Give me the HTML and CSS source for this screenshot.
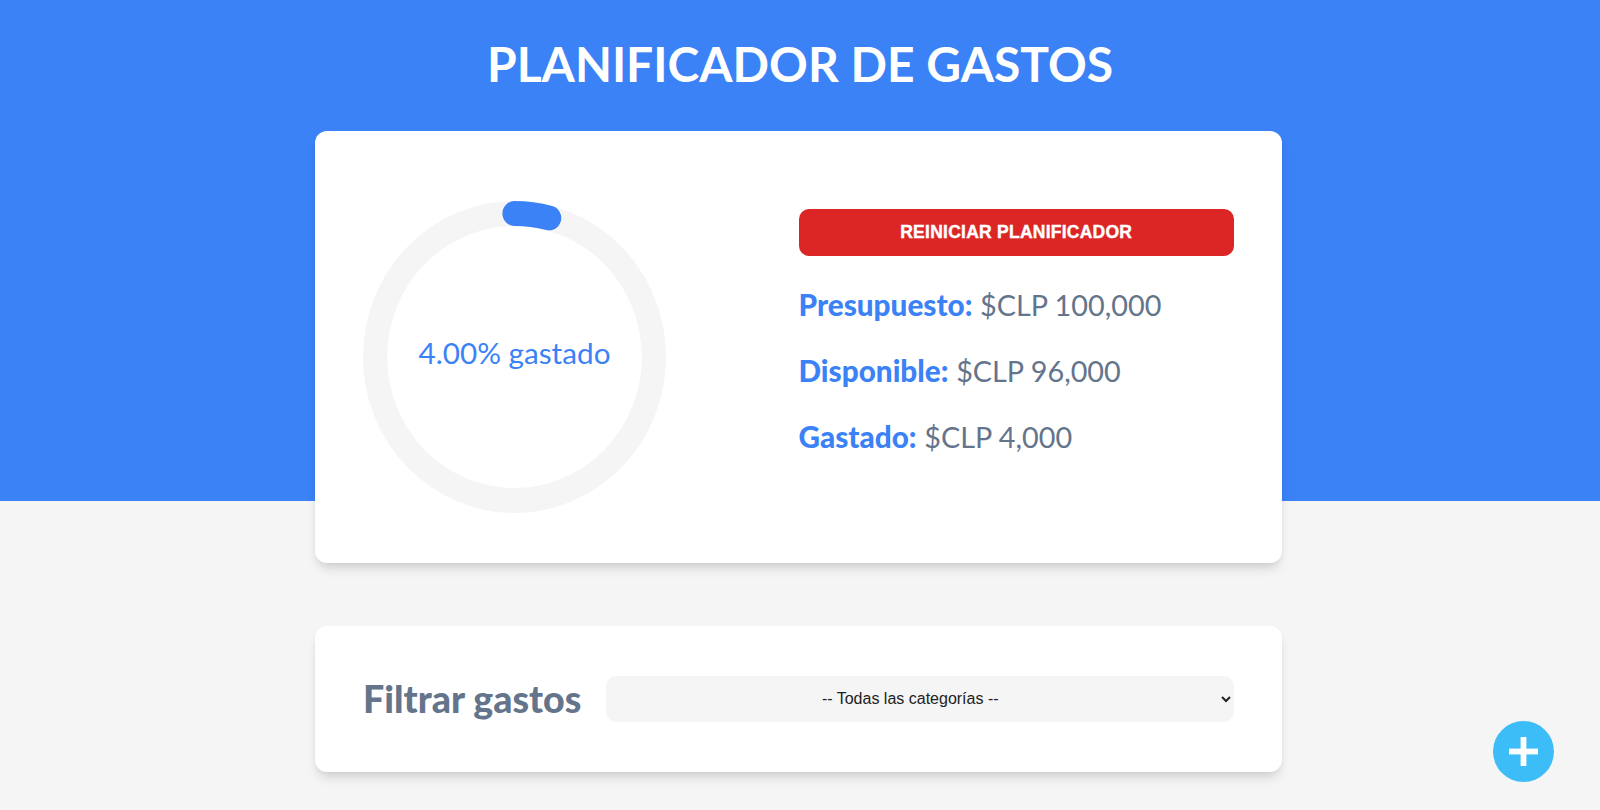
FILE: index.html
```html
<!DOCTYPE html>
<html lang="es">
<head>
<meta charset="UTF-8">
<title>Planificador de Gastos</title>
<link rel="stylesheet" href="styles.css">
</head>
<body>
<div class="page">
  <header class="header">
    <h1 class="title">Planificador de Gastos</h1>
  </header>

  <main class="main">
    <section class="card budget">
      <div class="chart-col">
        <div class="chart">
          <svg class="chart-svg" viewBox="0 0 100 100" preserveAspectRatio="none">
            <path class="trail" d="M 50,50 m 0,-46 a 46,46 0 1 1 0,92 a 46,46 0 1 1 0,-92"/>
            <path class="progress" d="M 50,50 m 0,-46 a 46,46 0 1 1 0,92 a 46,46 0 1 1 0,-92"/>
          </svg>
          <span class="chart-text">4.00% gastado</span>
        </div>
      </div>
      <div class="info-col">
        <button class="reset-btn" type="button">Reiniciar Planificador</button>
        <p class="stat"><span class="stat-label">Presupuesto:</span> <span class="stat-value">$CLP 100,000</span></p>
        <p class="stat"><span class="stat-label">Disponible:</span> <span class="stat-value">$CLP 96,000</span></p>
        <p class="stat"><span class="stat-label">Gastado:</span> <span class="stat-value">$CLP 4,000</span></p>
      </div>
    </section>

    <section class="card filter">
      <form class="filter-form">
        <label class="filter-label" for="filtro">Filtrar gastos</label>
        <select class="filter-select" id="filtro">
          <option value="">-- Todas las categorías --</option>
          <option value="ahorro">Ahorro</option>
          <option value="comida">Comida</option>
          <option value="casa">Casa</option>
        </select>
      </form>
    </section>
  </main>

  <button class="fab" type="button" aria-label="Nuevo gasto">
    <svg class="fab-icon" viewBox="0 0 30 30">
      <rect x="0" y="12" width="30" height="6" fill="#fff"/>
      <rect x="12" y="0" width="6" height="30" fill="#fff"/>
    </svg>
  </button>
</div>
</body>
</html>
```

FILE: styles.css
```css
* {
  box-sizing: border-box;
}

html, body {
  margin: 0;
  padding: 0;
}

body {
  font-family: Lato, "Noto Sans", sans-serif;
  background: #f5f5f5;
  min-height: 100vh;
}

.page {
  min-height: 810px;
  background: linear-gradient(to bottom, #3b82f6 0, #3b82f6 501px, #f5f5f5 501px, #f5f5f5 100%);
  overflow: hidden;
}

.header {
  padding-top: 35px;
}

.title {
  margin: 0 0 38px;
  text-align: center;
  text-transform: uppercase;
  color: #fff;
  font-family: Lato, sans-serif;
  font-weight: 700;
  font-size: 48px;
  line-height: 57.6px;
}

.main {
  width: 967px;
  margin-left: calc(50% - 485px);
}

.card {
  background: #fff;
  border-radius: 12px;
  padding: 50px 48px;
  box-shadow: 0 8px 12px -3px rgba(0, 0, 0, 0.14), 0 3px 6px -2px rgba(0, 0, 0, 0.06);
}

.budget {
  display: grid;
  grid-template-columns: 1fr 1fr;
  align-items: start;
}

.chart-col {
  padding-top: 20px;
}

.chart {
  position: relative;
  width: 303px;
  height: 312px;
}

.chart-svg {
  display: block;
  width: 100%;
  height: 100%;
}

.trail {
  fill: none;
  stroke: #f5f5f5;
  stroke-width: 8;
}

.progress {
  fill: none;
  stroke: #3b82f6;
  stroke-width: 8;
  stroke-linecap: round;
  stroke-dasharray: 289.03 289.03;
  stroke-dashoffset: 277.47;
}

.chart-text {
  position: absolute;
  left: 0;
  right: 0;
  top: 0;
  bottom: 9px;
  display: flex;
  align-items: center;
  justify-content: center;
  color: #3b82f6;
  font-family: Lato, sans-serif;
  font-size: 29.7px;
  white-space: nowrap;
}

.info-col {
  padding-top: 28px;
}

.reset-btn {
  display: block;
  width: 100%;
  height: 47px;
  border: none;
  border-radius: 10px;
  background: #dc2626;
  color: #fff;
  font-family: "Liberation Sans", Arial, sans-serif;
  font-weight: 700;
  font-size: 17.5px;
  letter-spacing: 0.25px;
  -webkit-text-stroke: 0.4px #fff;
  text-transform: uppercase;
  cursor: pointer;
}

.stat {
  margin: 30px 0 0;
  font-size: 29.7px;
  line-height: 36px;
  color: #64748b;
  font-weight: 400;
  position: relative;
  top: 1px;
}

.stat-label {
  color: #3b82f6;
  font-weight: 900;
}

.stat-value {
  font-size: 28.8px;
}

.filter {
  margin-top: 63px;
  padding: 50px 48px;
}

.filter-form {
  display: flex;
  align-items: center;
  gap: 25px;
}

.filter-label {
  font-size: 37.6px;
  font-weight: 900;
  color: #64748b;
  line-height: 46px;
  white-space: nowrap;
}

.filter-select {
  flex: 1;
  height: 46px;
  border: none;
  border-radius: 10px;
  background: #f5f5f5;
  font-family: "Liberation Sans", Arial, sans-serif;
  font-size: 16px;
  color: #222;
  text-align: center;
  text-align-last: center;
  padding: 0 14px 0 6px;
}

.fab {
  position: fixed;
  left: 1493px;
  top: 721px;
  width: 61px;
  height: 61px;
  border-radius: 50%;
  border: none;
  background: #3cbdf7;
  padding: 0;
  display: flex;
  align-items: center;
  justify-content: center;
  cursor: pointer;
}

.fab-icon {
  width: 29px;
  height: 29px;
  display: block;
}
```
